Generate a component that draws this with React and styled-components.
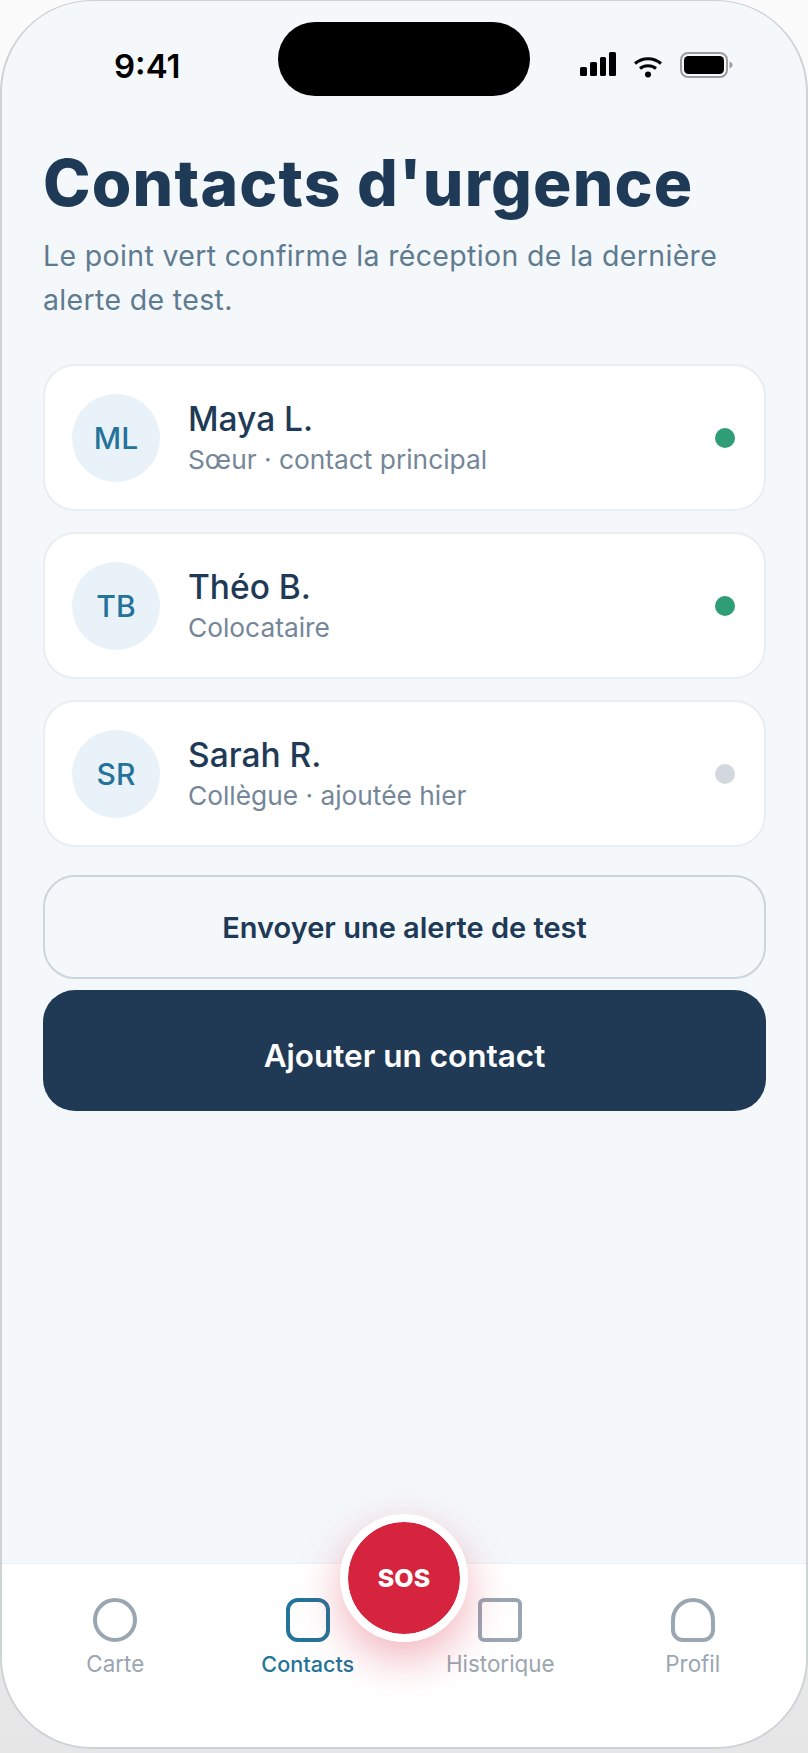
import React from "react";
import styled, { createGlobalStyle } from "styled-components";

const Global = createGlobalStyle`
  html, body { margin: 0; padding: 0; height: 1753px; overflow: hidden; background: #fff; }
  * { box-sizing: border-box; }
  #root { height: 1753px; }
`;

const Phone = styled.div`
  position: relative;
  width: 808px;
  height: 1749px;
  display: flex;
  flex-direction: column;
  background: #f4f8fb;
  border: 2px solid #cdd2d5;
  border-top-width: 1px;
  border-radius: 92px;
  overflow: hidden;
  font-family: Inter, "Liberation Sans", sans-serif;
`;

const Backdrop = styled.div`
  width: 808px;
  height: 1753px;
  overflow: hidden;
  background: linear-gradient(180deg, #fbfbfb 0%, #e6e6e6 100%);
`;

const StatusBar = styled.div`
  height: 107px;
  flex: none;
  display: grid;
  grid-template-columns: 276px 252px 1fr;
  padding-top: 21px;
`;

const Time = styled.div`
  padding: 25px 0 0 112px;
  font-size: 33px;
  line-height: 38px;
  font-weight: 600;
  color: #000;
`;

const Island = styled.div`
  height: 74px;
  background: #000;
  border-radius: 37px;
`;

const StatusIcons = styled.div`
  display: flex;
  align-items: flex-start;
  padding: 30px 0 0 50px;
  gap: 18px;
`;

const Content = styled.main`
  flex: 1;
  padding: 37px 40px 0 41px;
  display: flex;
  flex-direction: column;
`;

const Title = styled.h1`
  margin: 0;
  font-family: Inter, sans-serif;
  font-size: 64px;
  line-height: 76px;
  font-weight: 800;
  letter-spacing: 1.2px;
  color: #1f3a56;
  white-space: nowrap;
`;

const Subtitle = styled.p`
  margin: 13px 0 0;
  font-size: 28.5px;
  line-height: 44px;
  letter-spacing: 0.34px;
  color: #5f7b90;
`;

const List = styled.div`
  margin-top: 42px;
  display: flex;
  flex-direction: column;
  gap: 21px;
`;

const Card = styled.div`
  height: 147px;
  display: flex;
  align-items: center;
  padding: 0 29px 0 27px;
  background: #fff;
  border: 2px solid #e8eef2;
  border-radius: 32px;
`;

const Avatar = styled.div`
  width: 88px;
  height: 88px;
  flex: none;
  display: flex;
  align-items: center;
  justify-content: center;
  border-radius: 50%;
  background: #e9f2f8;
  color: #24739a;
  font-size: 30px;
  font-weight: 500;
`;

const Info = styled.div`
  flex: 1;
  padding-left: 28px;
  display: flex;
  flex-direction: column;
`;

const Name = styled.div`
  font-size: 33.5px;
  line-height: 40px;
  font-weight: 540;
  color: #1f3a56;
`;

const Detail = styled.div`
  margin-top: 5px;
  font-size: 26.3px;
  line-height: 32px;
  color: #748698;
`;

const Dot = styled.span`
  width: 20px;
  height: 20px;
  border-radius: 50%;
  background: ${(p) => (p.$on ? "#2f9e76" : "#d3d8de")};
`;

const OutlineButton = styled.div`
  margin-top: 28px;
  height: 104px;
  display: flex;
  align-items: center;
  justify-content: center;
  border: 2px solid #cbd5db;
  border-radius: 32px;
  color: #1f3a56;
  font-size: 29px;
  font-weight: 560;
`;

const PrimaryButton = styled.div`
  margin-top: 11px;
  height: 121px;
  display: flex;
  align-items: center;
  justify-content: center;
  padding-top: 9px;
  border-radius: 32px;
  background: #203a55;
  color: #fff;
  font-size: 31.5px;
  font-weight: 600;
`;

const TabBar = styled.nav`
  height: 184px;
  flex: none;
  display: grid;
  grid-template-columns: repeat(4, 1fr);
  padding: 34px 17px 0;
  background: #fff;
  border-top: 1px solid #edf1f4;
`;

const Tab = styled.div`
  display: flex;
  flex-direction: column;
  align-items: center;
  gap: 7px;
  font-size: ${(p) => (p.$active ? "21.6px" : "22.4px")};
  line-height: 30px;
  font-weight: ${(p) => (p.$active ? 500 : 400)};
  color: ${(p) => (p.$active ? "#24739a" : "#9aa6b2")};
`;

const Glyph = styled.span`
  width: 44px;
  height: 44px;
  border: 4px solid currentColor;
  border-radius: ${(p) => p.$radius};
`;

const SosButton = styled.div`
  position: absolute;
  left: 338px;
  top: 1513px;
  width: 128px;
  height: 128px;
  display: flex;
  align-items: center;
  justify-content: center;
  border-radius: 50%;
  border: 8px solid #fff;
  background: #d6243e;
  background-clip: padding-box;
  color: #fff;
  font-size: 25px;
  font-weight: 800;
  box-shadow: 0 16px 44px rgba(214, 36, 62, 0.35);
`;

const SignalIcon = () => (
  <svg width="36" height="25" viewBox="0 0 36 25" fill="#000">
    <rect x="0" y="15" width="7" height="9" rx="1.5" />
    <rect x="10" y="10" width="7" height="14" rx="1.5" />
    <rect x="20" y="5" width="6" height="19" rx="1.5" />
    <rect x="29" y="0" width="7" height="24" rx="1.5" />
  </svg>
);

const WifiIcon = () => (
  <svg width="28" height="22" viewBox="0 0 28 22" fill="none" stroke="#000" strokeWidth="3" style={{ marginTop: 4 }}>
    <path d="M1 7.5C8.5 1 19.5 1 27 7.5" />
    <path d="M6 12.5C10.5 8.7 17.5 8.7 22 12.5" />
    <circle cx="14" cy="18.5" r="3" fill="#000" stroke="none" />
  </svg>
);

const BatteryIcon = () => (
  <svg width="54" height="27" viewBox="0 0 54 27">
    <rect x="1" y="1" width="46" height="24" rx="7" fill="none" stroke="#9c9c9c" strokeWidth="2" />
    <rect x="4" y="4" width="40" height="18" rx="4.5" fill="#000" />
    <path d="M49.5 9.5c2 .8 3 2 3 3.5s-1 2.7-3 3.5z" fill="#9c9c9c" />
  </svg>
);

const contacts = [
  { initials: "ML", name: "Maya L.", detail: "Sœur · contact principal", on: true },
  { initials: "TB", name: "Théo B.", detail: "Colocataire", on: true },
  { initials: "SR", name: "Sarah R.", detail: "Collègue · ajoutée hier", on: false },
];

const tabs = [
  { label: "Carte", radius: "50%" },
  { label: "Contacts", radius: "12px", active: true },
  { label: "Historique", radius: "6px" },
  { label: "Profil", radius: "22px 22px 12px 12px" },
];

export default function App() {
  return (
    <Backdrop>
      <Global />
      <Phone>
        <StatusBar>
          <Time>9:41</Time>
          <Island />
          <StatusIcons>
            <SignalIcon />
            <WifiIcon />
            <BatteryIcon />
          </StatusIcons>
        </StatusBar>
        <Content>
          <Title>Contacts d'urgence</Title>
          <Subtitle>
            Le point vert confirme la réception de la dernière alerte de test.
          </Subtitle>
          <List>
            {contacts.map((c) => (
              <Card key={c.initials}>
                <Avatar>{c.initials}</Avatar>
                <Info>
                  <Name>{c.name}</Name>
                  <Detail>{c.detail}</Detail>
                </Info>
                <Dot $on={c.on} />
              </Card>
            ))}
          </List>
          <OutlineButton>Envoyer une alerte de test</OutlineButton>
          <PrimaryButton>Ajouter un contact</PrimaryButton>
        </Content>
        <TabBar>
          {tabs.map((t) => (
            <Tab key={t.label} $active={t.active}>
              <Glyph $radius={t.radius} />
              {t.label}
            </Tab>
          ))}
        </TabBar>
        <SosButton>SOS</SosButton>
      </Phone>
    </Backdrop>
  );
}
